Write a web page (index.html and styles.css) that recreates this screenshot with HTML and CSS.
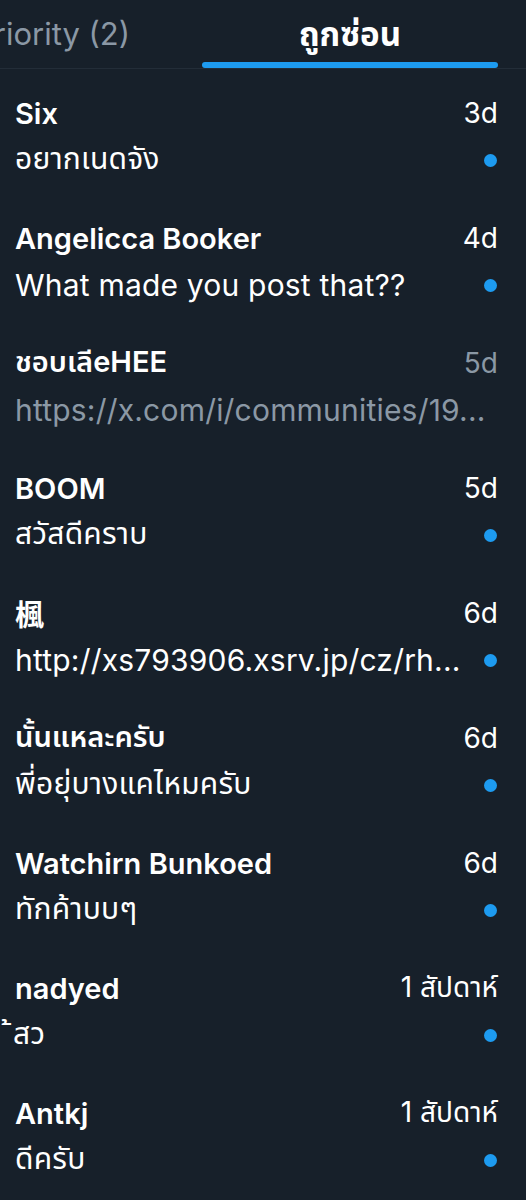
FILE: index.html
```html
<!DOCTYPE html>
<html lang="th">
<head>
    <meta charset="utf-8">
    <title>ข้อความ</title>
    <link rel="stylesheet" href="styles.css">
</head>
<body>
    <div class="tabs">
        <div class="tab">Priority (2)</div>
        <div class="tab active">ถูกซ่อน</div>
    </div>
    <ul class="inbox">
        <li class="item unread">
            <div class="line"><span class="name">Six</span><span class="time">3d</span></div>
            <div class="line"><span class="msg">อยากเนดจัง</span><i class="dot"></i></div>
        </li>
        <li class="item unread">
            <div class="line"><span class="name">Angelicca Booker</span><span class="time">4d</span></div>
            <div class="line"><span class="msg">What made you post that??</span><i class="dot"></i></div>
        </li>
        <li class="item">
            <div class="line"><span class="name">ชอบเลีeHEE</span><span class="time">5d</span></div>
            <div class="line"><span class="msg">https://x.com/i/communities/19...</span></div>
        </li>
        <li class="item unread">
            <div class="line"><span class="name">BOOM</span><span class="time">5d</span></div>
            <div class="line"><span class="msg">สวัสดีคราบ</span><i class="dot"></i></div>
        </li>
        <li class="item unread">
            <div class="line"><span class="name">楓</span><span class="time">6d</span></div>
            <div class="line"><span class="msg">http://xs793906.xsrv.jp/cz/rh...</span><i class="dot"></i></div>
        </li>
        <li class="item unread">
            <div class="line"><span class="name">นั้นแหละครับ</span><span class="time">6d</span></div>
            <div class="line"><span class="msg">พี่อยุ่บางแคไหมครับ</span><i class="dot"></i></div>
        </li>
        <li class="item unread">
            <div class="line"><span class="name">Watchirn Bunkoed</span><span class="time">6d</span></div>
            <div class="line"><span class="msg">ทักค้าบบๆ</span><i class="dot"></i></div>
        </li>
        <li class="item unread">
            <div class="line"><span class="name">nadyed</span><span class="time">1 สัปดาห์</span></div>
            <div class="line"><span class="msg short"><span class="mark">&nbsp;้</span>สว</span><i class="dot"></i></div>
        </li>
        <li class="item unread">
            <div class="line"><span class="name">Antkj</span><span class="time">1 สัปดาห์</span></div>
            <div class="line"><span class="msg">ดีครับ</span><i class="dot"></i></div>
        </li>
    </ul>
</body>
</html>
```

FILE: styles.css
```css
* {
    margin: 0;
    padding: 0;
}

body {
    background: #17202a;
    color: #ffffff;
    font-family: Inter, "Noto Sans Thai", "Noto Sans", "Noto Sans CJK JP", sans-serif;
    overflow: hidden;
}

.tabs {
    display: flex;
    margin-left: -100px;
    height: 68px;
    border-bottom: 1px solid #232d38;
}

.tab {
    width: 300px;
    box-sizing: border-box;
    text-align: center;
    font-size: 31px;
    line-height: 68px;
    color: #8b98a5;
}

.tab:first-child {
    padding-left: 4px;
}

.tab.active {
    position: relative;
    color: #ffffff;
    font-size: 33px;
    font-weight: 700;
}

.tab.active::after {
    content: "";
    position: absolute;
    left: 2px;
    right: 2px;
    bottom: 0;
    height: 6px;
    border-radius: 3px;
    background: #1d9bf0;
}

.inbox {
    list-style-type: none;
}

.item {
    height: 125px;
    padding: 22px 28px 0 15px;
    box-sizing: border-box;
}

.line {
    display: flex;
    align-items: center;
    justify-content: space-between;
    height: 44px;
}

.line + .line {
    margin-top: 3px;
}

.name {
    font-size: 29px;
    font-weight: 600;
}

.time {
    font-size: 28px;
    color: #8b98a5;
}

.msg {
    font-size: 30px;
    letter-spacing: 0.2px;
    color: #8b98a5;
    white-space: nowrap;
    overflow: hidden;
    text-overflow: ellipsis;
}

.msg.short {
    overflow: visible;
}

.unread .time,
.unread .msg {
    color: #ffffff;
}

.mark {
    display: inline-block;
    margin-left: -10px;
}

.dot {
    width: 13px;
    height: 13px;
    margin-right: 1px;
    border-radius: 50%;
    background: #1d9bf0;
    flex-shrink: 0;
}
```
